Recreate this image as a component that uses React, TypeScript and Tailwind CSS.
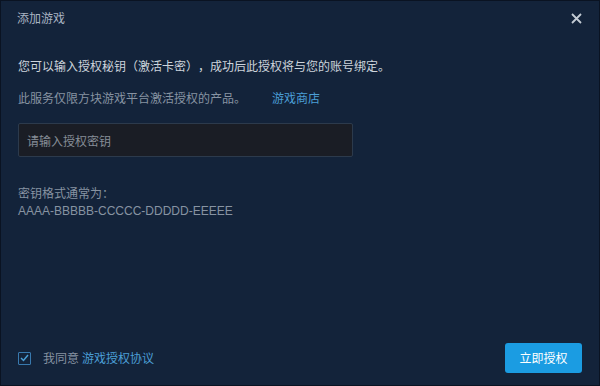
import React, { useState } from 'react';

const font = { fontFamily: '"Microsoft YaHei", "Noto Sans CJK SC", "Liberation Sans", sans-serif' };

export default function App() {
  const [agree, setAgree] = useState(true);
  const [key, setKey] = useState('');

  return (
    <div
      className="w-[600px] h-[386px] border border-[#0a1322] bg-[#13233a] flex flex-col text-[12px] leading-[18px] [text-spacing-trim:space-all]"
      style={font}
    >
      {/* Title bar */}
      <header className="h-[34px] pl-[16px] pr-[17px] flex items-center justify-between shrink-0">
        <span className="text-[#a9b4c2]">添加游戏</span>
        <button className="w-[12px] h-[12px] flex items-center justify-center text-[#c3cbd4]">
          <svg width="11" height="11" viewBox="0 0 11 11" fill="none" stroke="currentColor" strokeWidth="1.8">
            <path d="M1 1L10 10M10 1L1 10" />
          </svg>
        </button>
      </header>

      {/* Body */}
      <div className="flex-1 px-[17px] flex flex-col">
        <p className="mt-[22px] text-[#cdd4dc]">您可以输入授权秘钥（激活卡密），成功后此授权将与您的账号绑定。</p>
        <div className="mt-[14px] flex items-center">
          <span className="text-[#8793a2]">此服务仅限方块游戏平台激活授权的产品。</span>
          <a className="ml-[26px] text-[#4b9fd6] cursor-pointer">游戏商店</a>
        </div>
        <input
          value={key}
          onChange={(e) => setKey(e.target.value)}
          placeholder="请输入授权密钥"
          className="mt-[16px] w-[335px] h-[34px] px-[8px] bg-[#1a1d25] border border-[#2c3a4c] rounded-[2px] text-[#cdd4dc] placeholder:text-[#868d97] outline-none"
          style={font}
        />
        <p className="mt-[27px] text-[#8793a2]">密钥格式通常为：</p>
        <p className="text-[#8793a2]" style={{ fontFamily: '"Liberation Sans", "Noto Sans CJK SC", sans-serif' }}>
          AAAA-BBBBB-CCCCC-DDDDD-EEEEE
        </p>
      </div>

      {/* Footer */}
      <footer className="flex items-center justify-between pl-[17px] pr-[17px] pb-[12px]">
        <label className="flex items-center cursor-pointer" onClick={() => setAgree(!agree)}>
          <span className="w-[13px] h-[13px] border border-[#3879ae] rounded-[1px] flex items-center justify-center">
            {agree && (
              <svg width="9" height="8" viewBox="0 0 9 8" fill="none" stroke="#4b9fd6" strokeWidth="1.5">
                <path d="M1 4L3.5 6.5L8 1" />
              </svg>
            )}
          </span>
          <span className="ml-[12px] text-[#8793a2]">我同意</span>
          <a className="ml-[3px] text-[#4b9fd6]">游戏授权协议</a>
        </label>
        <button className="w-[77px] h-[30px] rounded-[3px] bg-[#1b9ce2] text-white">立即授权</button>
      </footer>
    </div>
  );
}
